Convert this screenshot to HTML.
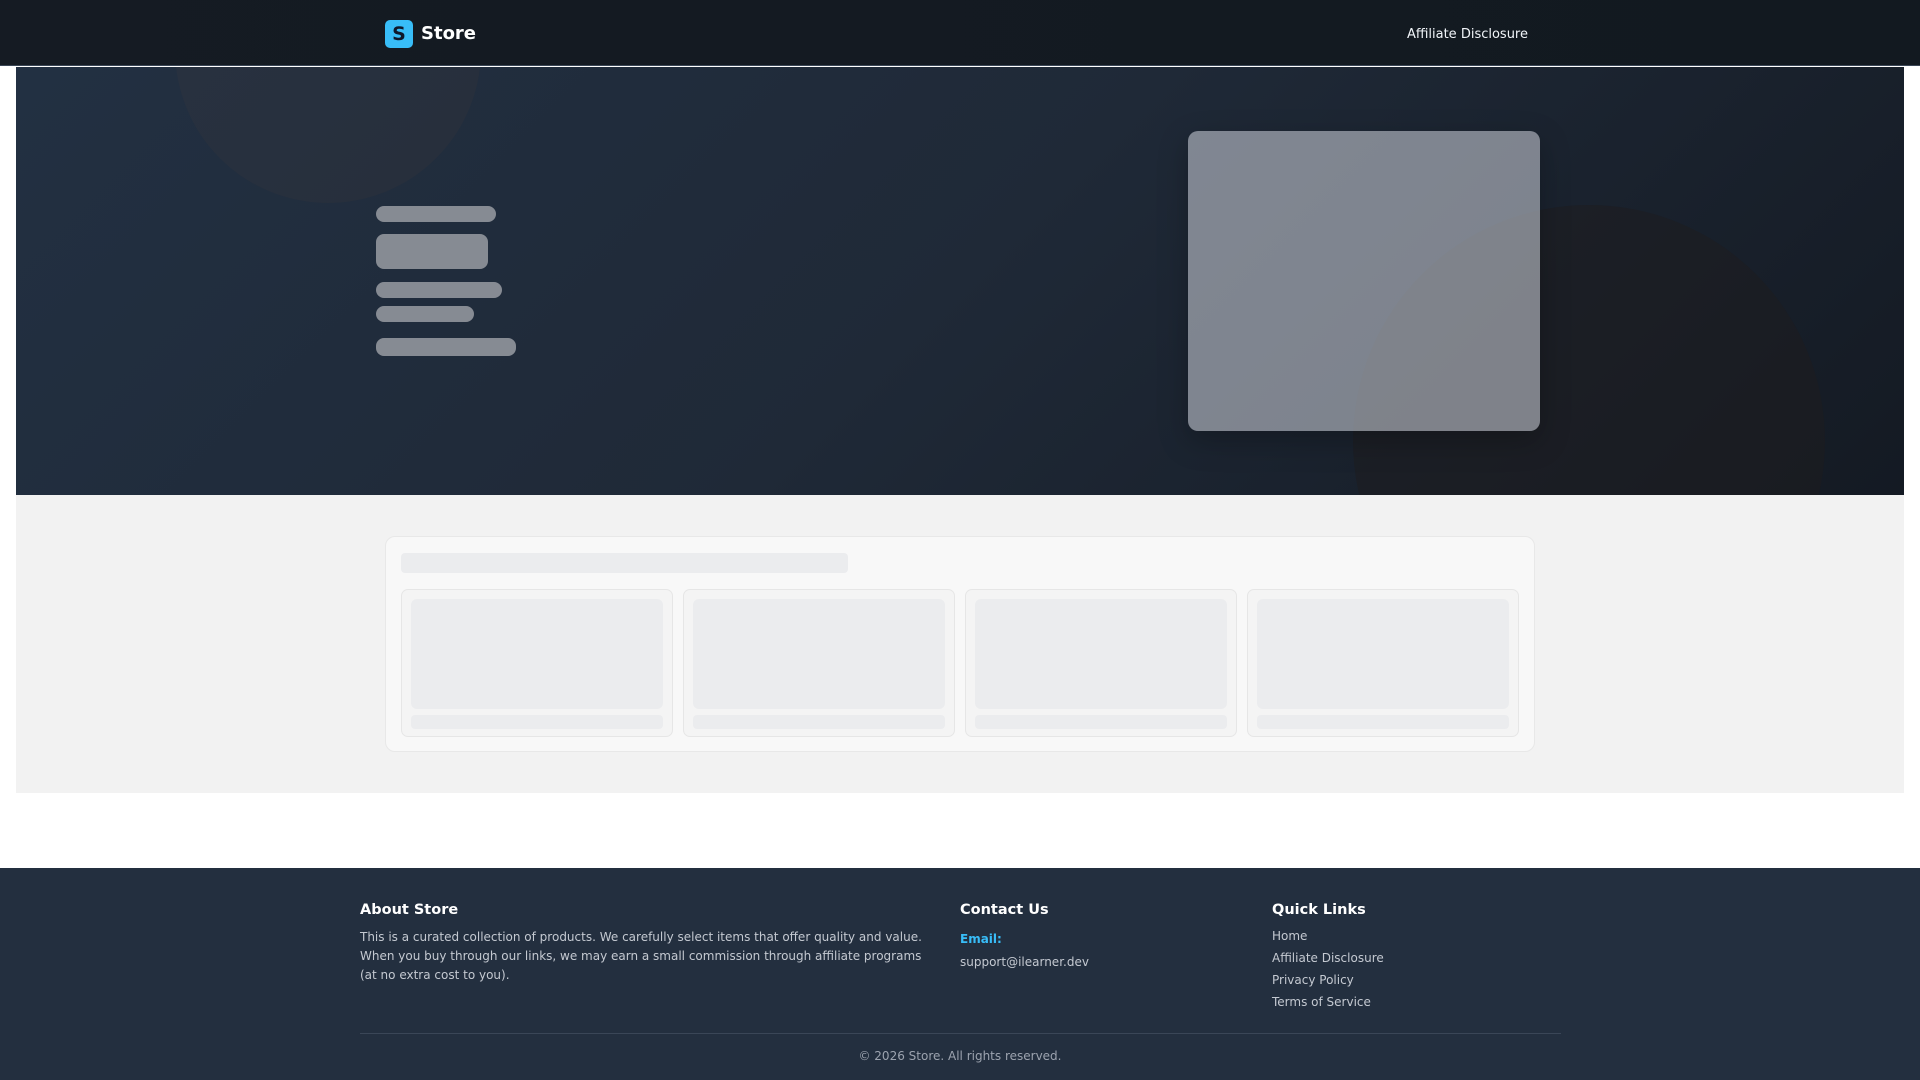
<!DOCTYPE html>
<html><head><meta charset="utf-8"><style>
*{margin:0;padding:0;box-sizing:border-box}
body{width:1920px;height:1080px;background:#fff;font-family:"DejaVu Sans","Liberation Sans",sans-serif;position:relative;overflow:hidden}
.hdr{position:absolute;left:0;top:0;width:1920px;height:66px;background:linear-gradient(90deg,#151b23,#121920);border-bottom:1px solid #3a4656}
.logo{position:absolute;left:385px;top:20px;width:28px;height:28px;background:#38bdf8;border-radius:5px;color:#0f172a;font-weight:bold;font-size:19px;text-align:center;line-height:28px}
.brand{position:absolute;left:421px;top:23px;color:#fff;font-weight:bold;font-size:18px}
.nav{position:absolute;right:392px;top:27px;color:#f1f5f9;font-size:13px}
.hero{position:absolute;left:16px;top:67px;width:1888px;height:428px;background:linear-gradient(135deg,#223042 0%,#1f2937 50%,#141a23 100%);overflow:hidden}
.c1{position:absolute;left:159px;top:-170px;width:306px;height:306px;border-radius:50%;background:rgba(60,55,60,.25)}
.c2{position:absolute;left:1337px;top:138px;width:472px;height:472px;border-radius:50%;background:rgba(30,28,30,.5)}
.bar{position:absolute;background:#868b93;border-radius:8px}
.img{position:absolute;left:1172px;top:64px;width:352px;height:300px;border-radius:10px;background:rgba(210,214,222,.55);box-shadow:0 10px 30px rgba(0,0,0,.25)}
.grey{position:absolute;left:16px;top:495px;width:1888px;height:298px;background:#f2f2f2}
.card{position:absolute;left:385px;top:536px;width:1150px;height:216px;background:#f8f8f8;border:1px solid #e8e8e8;border-radius:10px}
.tb{position:absolute;left:15px;top:16px;width:447px;height:20px;background:#ebecee;border-radius:4px}
.p{position:absolute;top:52px;width:272px;height:148px;background:#f4f4f4;border:1px solid #e6e6e6;border-radius:7px}
.pi{position:absolute;left:9px;top:9px;width:252px;height:110px;background:#ebecee;border-radius:6px}
.pb{position:absolute;left:9px;top:125px;width:252px;height:14px;background:#ebecee;border-radius:4px}
.ftr{position:absolute;left:0;top:868px;width:1920px;height:212px;background:#232f3f;color:#d1d5db}
.ftr h4{position:absolute;top:34px;color:#fff;font-size:14.5px;font-weight:bold}
.ftr .t{position:absolute;font-size:12px;line-height:19px;color:#c4c9d1}
.ftr a{display:block;color:#c4c9d1;font-size:12px;height:22px}
.hr{position:absolute;left:360px;top:165px;width:1201px;height:1px;background:#3a4657}
.copy{position:absolute;left:0;width:1920px;top:181px;text-align:center;color:#9ca3af;font-size:12px}
</style></head><body>
<div class="hdr"><div class="logo">S</div><div class="brand">Store</div><div class="nav">Affiliate Disclosure</div></div>
<div class="hero"><div class="c1"></div><div class="c2"></div>
<div class="bar" style="left:360px;top:139px;width:120px;height:16px"></div>
<div class="bar" style="left:360px;top:167px;width:112px;height:35px"></div>
<div class="bar" style="left:360px;top:215px;width:126px;height:16px"></div>
<div class="bar" style="left:360px;top:239px;width:98px;height:16px"></div>
<div class="bar" style="left:360px;top:271px;width:140px;height:18px"></div>
<div class="img"></div></div>
<div class="grey"></div>
<div class="card"><div class="tb"></div>
<div class="p" style="left:15px"><div class="pi"></div><div class="pb"></div></div>
<div class="p" style="left:297px"><div class="pi"></div><div class="pb"></div></div>
<div class="p" style="left:579px"><div class="pi"></div><div class="pb"></div></div>
<div class="p" style="left:861px"><div class="pi"></div><div class="pb"></div></div>
</div>
<div class="ftr">
<h4 style="left:360px">About Store</h4>
<div class="t" style="left:360px;top:60px;width:575px">This is a curated collection of products. We carefully select items that offer quality and value. When you buy through our links, we may earn a small commission through affiliate programs (at no extra cost to you).</div>
<h4 style="left:960px">Contact Us</h4>
<div class="t" style="left:960px;top:62px;color:#38bdf8;font-weight:bold">Email:</div>
<div class="t" style="left:960px;top:85px">support@ilearner.dev</div>
<h4 style="left:1272px">Quick Links</h4>
<div class="t" style="left:1272px;top:59px"><a>Home</a><a>Affiliate Disclosure</a><a>Privacy Policy</a><a>Terms of Service</a></div>
<div class="hr"></div>
<div class="copy">© 2026 Store. All rights reserved.</div>
</div>
</body></html>
